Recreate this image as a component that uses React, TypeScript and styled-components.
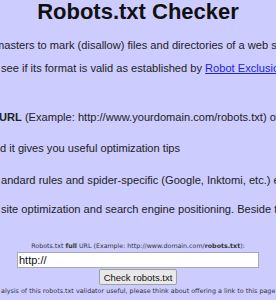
import React from 'react';
import styled, { createGlobalStyle } from 'styled-components';

const Global = createGlobalStyle`
  html, body { margin: 0; padding: 0; background: #ccccff; }
  body {
    width: 276px;
    height: 300px;
    overflow: hidden;
    font-family: "Liberation Sans", Arial, sans-serif;
    color: #222;
  }
`;

const Page = styled.main`
  display: flex;
  flex-direction: column;
  width: 276px;
  height: 300px;
  overflow: hidden;
`;

const Title = styled.h1`
  margin: 0;
  font-size: 22px;
  line-height: 24px;
  font-weight: bold;
  text-align: center;
  color: #111;
`;

const Line = styled.p<{ $lead: number; $gap: number }>`
  margin: ${(p) => p.$gap}px 0 0 ${(p) => p.$lead}px;
  font-size: 11.1px;
  line-height: 13px;
  white-space: nowrap;
`;

const Link = styled.a`
  color: #2222dd;
  text-decoration: underline;
`;

const Form = styled.form`
  display: flex;
  flex-direction: column;
  align-items: center;
  margin-top: 26px;
  gap: 1px;
`;

const Label = styled.label`
  font-family: "DejaVu Sans", Verdana, sans-serif;
  font-size: 6.3px;
  line-height: 8px;
  color: #333;
  white-space: nowrap;
  margin-bottom: 1px;
`;

const UrlInput = styled.input`
  box-sizing: border-box;
  width: 242px;
  height: 16px;
  margin: 0;
  padding: 0 1px;
  border: 1px solid #a8a8b8;
  background: #fff;
  font-family: "Liberation Sans", Arial, sans-serif;
  font-size: 11px;
  color: #111;
  outline: none;
`;

const CheckButton = styled.button`
  box-sizing: border-box;
  width: 78px;
  height: 16px;
  margin: 0;
  padding: 0;
  border: 1px solid #a0a0a0;
  border-radius: 2px;
  background: #e8e8e8;
  font-family: "Liberation Sans", Arial, sans-serif;
  font-size: 9.5px;
  color: #111;
`;

const Footnote = styled.p<{ $lead: number }>`
  margin: 2px 0 0 ${(p) => p.$lead}px;
  font-family: "DejaVu Sans", Verdana, sans-serif;
  font-size: 6.4px;
  line-height: 8px;
  color: #333;
  white-space: nowrap;
`;

export default function App() {
  return (
    <>
      <Global />
      <Page>
        <Title>Robots.txt Checker</Title>
        <Line $gap={15} $lead={-5}>
          masters to mark (disallow) files and directories of a web site that search engine spiders should not access
        </Line>
        <Line $gap={10} $lead={1}>
          see if its format is valid as established by <Link href="#">Robot Exclusion Standard</Link>
        </Line>
        <Line $gap={36} $lead={-1}>
          <b>URL</b> (Example: http://www.yourdomain.com/robots.txt) of the robots.txt file
        </Line>
        <Line $gap={18} $lead={0}>
          d it gives you useful optimization tips
        </Line>
        <Line $gap={19} $lead={1}>
          andard rules and spider-specific (Google, Inktomi, etc.) extensions
        </Line>
        <Line $gap={16} $lead={1}>
          site optimization and search engine positioning. Beside this
        </Line>
        <Form onSubmit={(e) => e.preventDefault()}>
          <Label>
            Robots.txt <b>full</b> URL (Example: http://www.domain.com/<b>robots.txt</b>):
          </Label>
          <UrlInput defaultValue="http://" />
          <CheckButton type="submit">Check robots.txt</CheckButton>
        </Form>
        <Footnote $lead={1}>
          alysis of this robots.txt validator useful, please think about offering a link to this page from your site
        </Footnote>
      </Page>
    </>
  );
}
